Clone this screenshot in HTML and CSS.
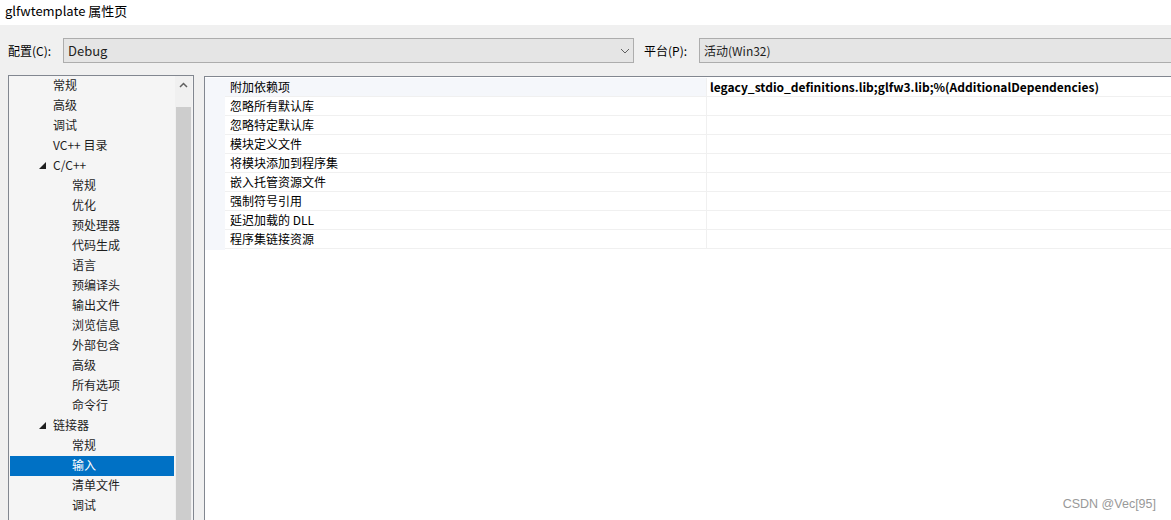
FILE: index.html
```html
<!DOCTYPE html>
<html lang="zh-CN">
<head>
    <meta charset="UTF-8">
    <title>glfwtemplate 属性页</title>
    <link rel="stylesheet" href="styles.css">
</head>
<body>
    <div class="titlebar">glfwtemplate 属性页</div>

    <div class="config-row">
        <span class="label">配置(C):</span>
        <div class="select select-config">
            <span>Debug</span>
            <svg class="chevron" width="10" height="6" viewBox="0 0 10 6"><path d="M1 1 L5 5 L9 1" fill="none" stroke="#606060" stroke-width="1"/></svg>
        </div>
        <span class="label label-platform">平台(P):</span>
        <div class="select select-platform">
            <span>活动(Win32)</span>
        </div>
    </div>

    <div class="main">
        <div class="tree">
            <ul class="tree-list">
                <li class="lvl1">常规</li>
                <li class="lvl1">高级</li>
                <li class="lvl1">调试</li>
                <li class="lvl1">VC++ 目录</li>
                <li class="lvl1 open"><svg class="arrow" width="7" height="7" viewBox="0 0 7 7"><polygon points="7,0 7,7 0,7" fill="#1e1e1e"/></svg>C/C++</li>
                <li class="lvl2">常规</li>
                <li class="lvl2">优化</li>
                <li class="lvl2">预处理器</li>
                <li class="lvl2">代码生成</li>
                <li class="lvl2">语言</li>
                <li class="lvl2">预编译头</li>
                <li class="lvl2">输出文件</li>
                <li class="lvl2">浏览信息</li>
                <li class="lvl2">外部包含</li>
                <li class="lvl2">高级</li>
                <li class="lvl2">所有选项</li>
                <li class="lvl2">命令行</li>
                <li class="lvl1 open"><svg class="arrow" width="7" height="7" viewBox="0 0 7 7"><polygon points="7,0 7,7 0,7" fill="#1e1e1e"/></svg>链接器</li>
                <li class="lvl2">常规</li>
                <li class="lvl2 selected">输入</li>
                <li class="lvl2">清单文件</li>
                <li class="lvl2">调试</li>
            </ul>
            <div class="scrollbar">
                <div class="scroll-up">
                    <svg width="9" height="6" viewBox="0 0 9 6"><path d="M1 5 L4.5 1.5 L8 5" fill="none" stroke="#606060" stroke-width="1.5"/></svg>
                </div>
                <div class="scroll-thumb"></div>
            </div>
        </div>

        <div class="grid">
            <div class="gutter"></div>
            <div class="rows">
                <div class="row active">
                    <div class="name">附加依赖项</div>
                    <div class="value">legacy_stdio_definitions.lib;glfw3.lib;%(AdditionalDependencies)</div>
                </div>
                <div class="row"><div class="name">忽略所有默认库</div><div class="value"></div></div>
                <div class="row"><div class="name">忽略特定默认库</div><div class="value"></div></div>
                <div class="row"><div class="name">模块定义文件</div><div class="value"></div></div>
                <div class="row"><div class="name">将模块添加到程序集</div><div class="value"></div></div>
                <div class="row"><div class="name">嵌入托管资源文件</div><div class="value"></div></div>
                <div class="row"><div class="name">强制符号引用</div><div class="value"></div></div>
                <div class="row"><div class="name">延迟加载的 DLL</div><div class="value"></div></div>
                <div class="row"><div class="name">程序集链接资源</div><div class="value"></div></div>
            </div>
            <div class="watermark">CSDN @Vec[95]</div>
        </div>
    </div>
</body>
</html>
```

FILE: styles.css
```css
body {
    margin: 0;
    width: 1171px;
    height: 520px;
    overflow: hidden;
    background-color: #f0f0f0;
    font-family: "Noto Sans CJK SC", "Noto Sans", sans-serif;
    font-size: 12px;
    color: #1e1e1e;
}
.titlebar {
    height: 25px;
    line-height: 22px;
    padding-left: 5px;
    background-color: #ffffff;
    font-size: 13px;
    color: #000;
}
.config-row {
    display: flex;
    align-items: center;
    height: 25px;
    margin-top: 13px;
    padding-left: 8px;
}
.label {
    width: 55px;
    font-size: 12px;
    color: #000;
}
.label-platform {
    margin-left: 10px;
}
.select {
    box-sizing: border-box;
    height: 25px;
    display: flex;
    align-items: center;
    background-color: #e5e5e5;
    border: 1px solid #adadad;
    padding-left: 4px;
}
.select-config {
    width: 571px;
    font-size: 13px;
}
.select-config .chevron {
    margin-left: auto;
    margin-right: 3px;
}
.select-platform {
    flex: 1;
    margin-right: -2px;
    font-size: 12px;
}
.main {
    display: flex;
    gap: 10px;
    margin-top: 12px;
    padding-left: 8px;
    height: 445px;
    overflow: hidden;
}
.tree {
    box-sizing: border-box;
    width: 186px;
    display: flex;
    background-color: #f5f5f5;
    border: 1px solid #828790;
    border-bottom: none;
}
.tree-list {
    list-style: none;
    margin: 0;
    padding: 0 0 0 1px;
    flex: 1;
}
.tree-list li {
    box-sizing: border-box;
    height: 20px;
    line-height: 17px;
    padding-bottom: 3px;
    display: flex;
    align-items: center;
    white-space: nowrap;
}
.tree-list .lvl1 {
    padding-left: 43px;
}
.tree-list .lvl2 {
    padding-left: 62px;
}
.tree-list .open {
    padding-left: 29px;
}
.arrow {
    margin-right: 7px;
    margin-top: 1px;
}
.tree-list .selected {
    background-color: #0071c5;
    color: #ffffff;
}
.scrollbar {
    width: 17px;
    margin-left: 1px;
    margin-right: 1px;
    display: flex;
    flex-direction: column;
    background-color: #f0f0f0;
}
.scroll-up {
    height: 31px;
    display: flex;
    justify-content: center;
    padding-top: 6px;
    box-sizing: border-box;
}
.scroll-thumb {
    flex: 1;
    margin: 0 1px;
    background-color: #cdcdcd;
}
.grid {
    position: relative;
    flex: 1;
    display: flex;
    margin-top: 1px;
    margin-right: -2px;
    background-color: #ffffff;
    border: 1px solid #828790;
    border-bottom: none;
}
.gutter {
    width: 20px;
    height: 172px;
    margin-top: 1px;
    background-color: #f5f7fb;
}
.rows {
    flex: 1;
    padding-top: 1px;
}
.row {
    display: flex;
    height: 19px;
    box-sizing: border-box;
    border-bottom: 1px solid #f0f0f0;
}
.name {
    box-sizing: border-box;
    width: 482px;
    padding-left: 5px;
    line-height: 18px;
    border-right: 1px solid #f0f0f0;
    color: #000;
}
.row.active .name {
    background-color: #f5f7fb;
}
.value {
    flex: 1;
    padding-left: 3px;
    line-height: 18px;
    font-weight: bold;
    color: #000;
}
.watermark {
    position: absolute;
    right: 16px;
    bottom: 9px;
    font-family: "Liberation Sans", Arial, sans-serif;
    font-size: 12.5px;
    color: #999999;
}
```
